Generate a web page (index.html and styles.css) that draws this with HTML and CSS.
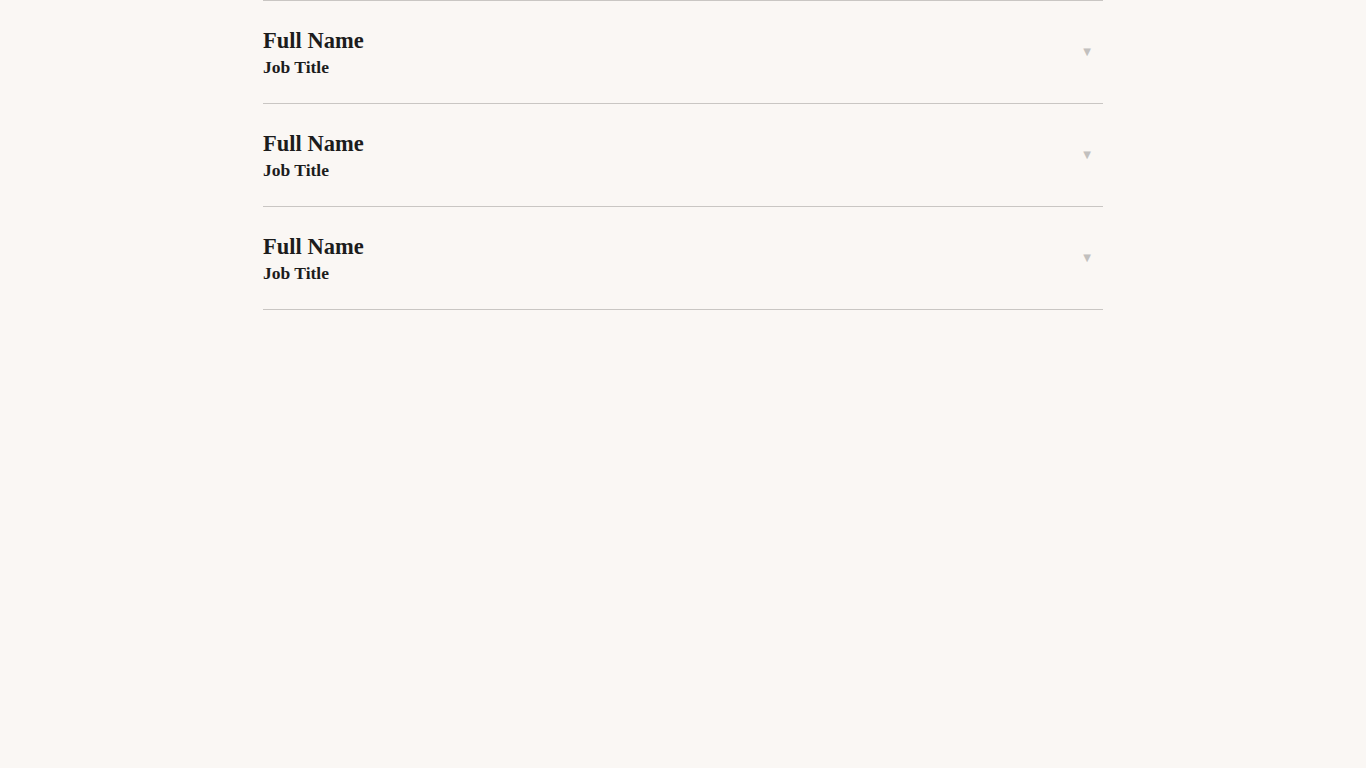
FILE: index.html
```html
<!DOCTYPE html>
<html>
<head>
<meta charset="utf-8">
<link rel="stylesheet" href="styles.css">
</head>
<body>
<div class="list">
  <div class="item">
    <div class="info">
      <div class="name">Full Name</div>
      <div class="title">Job Title</div>
    </div>
    <span class="arrow">▼</span>
  </div>
  <div class="item">
    <div class="info">
      <div class="name">Full Name</div>
      <div class="title">Job Title</div>
    </div>
    <span class="arrow">▼</span>
  </div>
  <div class="item">
    <div class="info">
      <div class="name">Full Name</div>
      <div class="title">Job Title</div>
    </div>
    <span class="arrow">▼</span>
  </div>
</div>
</body>
</html>
```
FILE: styles.css
```css
html, body {
  margin: 0;
  padding: 0;
  background: #faf7f4;
}
body {
  font-family: "Liberation Serif", "Times New Roman", serif;
  color: #1c1c1c;
}
.list {
  width: 840px;
  margin: 0 auto;
  border-top: 1px solid #c9c6c3;
}
.item {
  display: flex;
  align-items: center;
  justify-content: space-between;
  height: 102px;
  border-bottom: 1px solid #c9c6c3;
}
.info {
  display: flex;
  flex-direction: column;
  margin-top: 1px;
}
.name {
  font-size: 22.5px;
  font-weight: 700;
  line-height: 25px;
}
.title {
  font-size: 17.5px;
  font-weight: 700;
  line-height: 22px;
  margin-top: 3px;
}
.arrow {
  font-size: 10px;
  color: #c2c0be;
  margin-right: 12px;
  margin-bottom: 2px;
  font-family: "DejaVu Sans", sans-serif;
}
```
